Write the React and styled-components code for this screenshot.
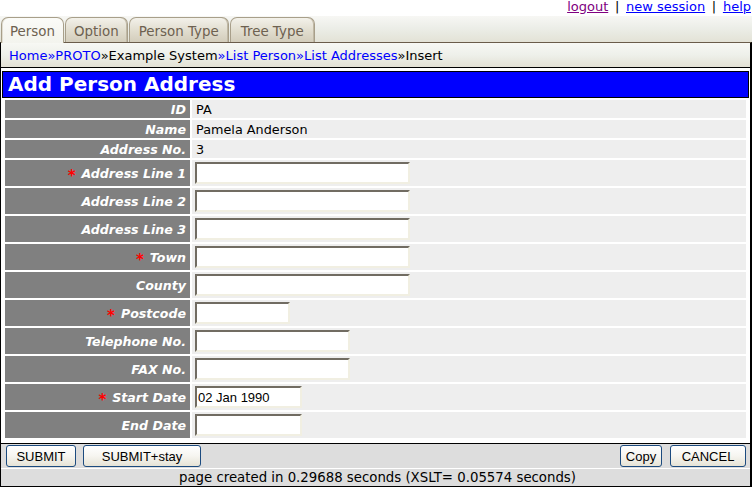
import React from 'react';
import styled, { createGlobalStyle } from 'styled-components';

const GlobalStyle = createGlobalStyle`
  html, body { margin: 0; padding: 0; background: #fff; }
  body {
    font-family: "DejaVu Sans", Verdana, sans-serif;
    font-size: 13px;
    color: #000;
    width: 752px;
    overflow: hidden;
  }
`;

const Page = styled.div`
  width: 752px;
  height: 487px;
  display: flex;
  flex-direction: column;
`;

const TopLinks = styled.div`
  height: 16px;
  display: flex;
  justify-content: flex-end;
  align-items: flex-start;
  padding-right: 1px;
  font-size: 13px;
  line-height: 14px;
  white-space: pre;
`;

const TopLink = styled.a`
  color: ${p => (p.$visited ? '#800080' : '#0000ff')};
  text-decoration: underline;
  cursor: pointer;
`;

const Sep = styled.span`
  margin: 0 6.7px;
`;

const TabBar = styled.div`
  height: 26px;
  display: flex;
  align-items: flex-end;
  gap: 1px;
  padding-left: 1px;
  background: linear-gradient(#f7f7f4 0%, #eceee8 45%, #e3e2d6 100%);
  position: relative;
  z-index: 1;
`;

const Tab = styled.div`
  height: ${p => (p.$active ? '26px' : '25px')};
  margin-bottom: ${p => (p.$active ? '-1px' : '0')};
  box-sizing: border-box;
  padding: 0 ${p => p.$pad}px;
  display: flex;
  align-items: center;
  padding-top: 2px;
  border: 1px solid #a89f8a;
  border-bottom: none;
  border-radius: 7px 7px 0 0;
  color: #6d6150;
  font-size: 13.4px;
  background: ${p =>
    p.$active
      ? 'linear-gradient(#fbfbf8 0%, #f6f6f1 60%, #f3f4ee 100%)'
      : 'linear-gradient(#f3f1ea 0%, #e2ded0 50%, #d3cdbb 100%)'};
  box-shadow: ${p => (p.$active ? 'inset 1px 0 0 #e0ddd2' : 'inset -1px 0 0 #bfb8a5')};
`;

const Breadcrumb = styled.div`
  height: 26px;
  box-sizing: border-box;
  border-top: 1px solid #6a5c4a;
  border-left: 1px solid #000;
  border-right: 2px solid #000;
  border-bottom: 1px solid #000;
  background: linear-gradient(#f7f8f4 0%, #eef0ea 50%, #e3e1d5 100%);
  display: flex;
  align-items: center;
  padding-left: 8px;
  font-size: 13px;
  white-space: pre;
`;

const Crumb = styled.a`
  color: #0000ff;
  text-decoration: none;
  cursor: pointer;
`;

const Panel = styled.div`
  flex: 1;
  border-left: 1px solid #000;
  border-right: 2px solid #000;
  border-bottom: 1px solid #000;
  display: flex;
  flex-direction: column;
  padding-top: 3px;
  background: #fff;
`;

const Heading = styled.h1`
  margin: 0 1px;
  height: 27px;
  box-sizing: border-box;
  border: 1px solid #000;
  background: #0000ff;
  color: #fff;
  font-size: 20px;
  font-weight: bold;
  line-height: 25px;
  padding-left: 5px;
`;

const FormGrid = styled.div`
  margin: 0 2px;
  padding: 2px;
  display: grid;
  grid-template-columns: 185px 1fr;
  gap: 2px;
  background: #fff;
`;

const LabelCell = styled.div`
  height: ${p => p.$h}px;
  background: #808080;
  color: #fff;
  font-size: 12.6px;
  font-weight: bold;
  font-style: italic;
  display: flex;
  align-items: center;
  justify-content: flex-end;
  padding-right: 4px;
`;

const Req = styled.span`
  color: #ff0000;
  font-style: normal;
  font-weight: bold;
  margin-right: 6px;
  margin-top: 6px;
  font-size: 15px;
  line-height: 1;
`;

const ValueCell = styled.div`
  height: ${p => p.$h}px;
  background: #eeeeee;
  font-size: 12.8px;
  display: flex;
  align-items: center;
  padding-left: ${p => p.$pad}px;
`;

const TextInput = styled.input`
  width: ${p => p.$w}px;
  height: 22px;
  box-sizing: border-box;
  border-style: solid;
  border-width: 2px;
  border-color: #716c62 #f1efe2 #f1efe2 #716c62;
  background: #fff;
  padding: 0 1px;
  margin: 0;
  font-family: "Liberation Sans", Arial, sans-serif;
  font-size: 13px;
  color: #000;
  outline: none;
`;

const ButtonBar = styled.div`
  margin-top: auto;
  border-top: 1px solid #000;
  background: #dddddd;
  height: 25px;
  box-sizing: border-box;
  display: flex;
  align-items: center;
  justify-content: space-between;
  padding: 0 4px 0 5px;
`;

const ButtonGroup = styled.div`
  display: flex;
  gap: ${p => p.$gap}px;
`;

const Button = styled.button`
  width: ${p => p.$w}px;
  height: 22px;
  box-sizing: border-box;
  border: 1px solid #1c4b7f;
  border-radius: 3px;
  background: linear-gradient(#ffffff 0%, #f6f5f0 50%, #e6e3d6 100%);
  font-family: "Liberation Sans", Arial, sans-serif;
  font-size: 13px;
  color: #000;
  padding: 0;
  cursor: pointer;
`;

const Footer = styled.div`
  border-top: 1px solid #fff;
  background: #dddddd;
  height: 18px;
  box-sizing: border-box;
  display: flex;
  align-items: center;
  justify-content: center;
  font-size: 13.3px;
  padding-left: 4px;
`;

const rows = [
  { label: 'ID', value: 'PA' },
  { label: 'Name', value: 'Pamela Anderson' },
  { label: 'Address No.', value: '3' },
  { label: 'Address Line 1', req: true, input: 215 },
  { label: 'Address Line 2', input: 215 },
  { label: 'Address Line 3', input: 215 },
  { label: 'Town', req: true, input: 215 },
  { label: 'County', input: 215 },
  { label: 'Postcode', req: true, input: 95 },
  { label: 'Telephone No.', input: 155 },
  { label: 'FAX No.', input: 155 },
  { label: 'Start Date', req: true, input: 107, defaultValue: '02 Jan 1990' },
  { label: 'End Date', input: 107 },
];

export default function App() {
  return (
    <Page>
      <GlobalStyle />
      <TopLinks>
        <TopLink $visited>logout</TopLink>
        <Sep>|</Sep>
        <TopLink>new session</TopLink>
        <Sep>|</Sep>
        <TopLink>help</TopLink>
      </TopLinks>
      <TabBar>
        <Tab $active $pad={8}>Person</Tab>
        <Tab $pad={8}>Option</Tab>
        <Tab $pad={9}>Person Type</Tab>
        <Tab $pad={10}>Tree Type</Tab>
      </TabBar>
      <Breadcrumb>
        <Crumb>Home</Crumb>
        <Crumb>»PROTO</Crumb>
        <span>»Example System</span>
        <Crumb>»List Person</Crumb>
        <Crumb>»List Addresses</Crumb>
        <span>»Insert</span>
      </Breadcrumb>
      <Panel>
        <Heading>Add Person Address</Heading>
        <FormGrid>
          {rows.map(r => {
            const h = r.input ? 26 : 18;
            return (
              <React.Fragment key={r.label}>
                <LabelCell $h={h}>
                  {r.req && <Req>*</Req>}
                  {r.label}
                </LabelCell>
                <ValueCell $h={h} $pad={r.input ? 3 : 4}>
                  {r.input ? (
                    <TextInput type="text" $w={r.input} defaultValue={r.defaultValue || ''} />
                  ) : (
                    r.value
                  )}
                </ValueCell>
              </React.Fragment>
            );
          })}
        </FormGrid>
        <ButtonBar>
          <ButtonGroup $gap={7}>
            <Button $w={70}>SUBMIT</Button>
            <Button $w={118}>SUBMIT+stay</Button>
          </ButtonGroup>
          <ButtonGroup $gap={8}>
            <Button $w={42}>Copy</Button>
            <Button $w={76}>CANCEL</Button>
          </ButtonGroup>
        </ButtonBar>
        <Footer>page created in 0.29688 seconds (XSLT= 0.05574 seconds)</Footer>
      </Panel>
    </Page>
  );
}
